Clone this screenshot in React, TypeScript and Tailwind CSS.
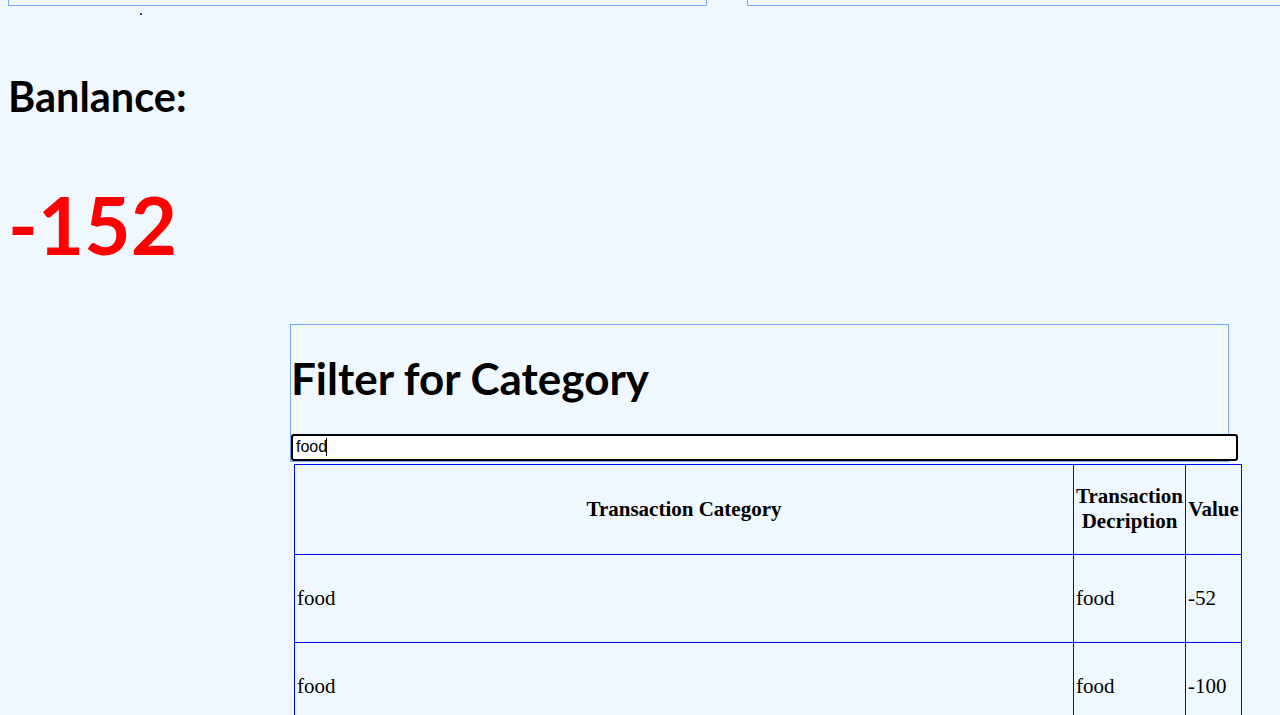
import React from "react";

export default function App() {
  const rows = [
    { cat: "food", desc: "food", val: "-52" },
    { cat: "food", desc: "food", val: "-100" },
  ];
  return (
    <div className="min-h-[715px] h-[715px] overflow-hidden bg-[#f0f8ff] px-[8px]" style={{ fontFamily: "Lato, sans-serif" }}>
      <div className="flex gap-[40px]">
        <div className="w-[699px] h-[6px] border-x border-b border-[#79a7f7] shrink-0" />
        <div className="w-[700px] h-[6px] border-x border-b border-[#79a7f7] shrink-0" />
      </div>
      <div className="pt-[7px] pl-[132px]">
        <div className="w-[2px] h-[2px] bg-[#2233ff]" />
      </div>
      <h2 className="mt-[57px] text-[41.5px] leading-[1.2] font-bold text-black">Banlance:</h2>
      <div className="mt-[54px] text-[80px] leading-[1.2] font-bold text-[#ff0000]">-152</div>
      <div className="ml-[282px] mt-[52px]">
        <div className="w-[939px] h-[138px] border border-[#79a7f7]">
          <h1 className="mt-[27px] text-[44px] leading-[1.2] font-bold text-black">Filter for Category</h1>
          <div className="mt-[29px] w-[947px] h-[27px] border-2 border-black rounded-[3px] bg-white flex items-center pl-[3px] text-[16px] text-black" style={{ fontFamily: '"Liberation Sans", Arial, sans-serif' }}>
            <span>food</span>
            <span className="w-[1px] h-[18px] bg-black -ml-[1px]" />
          </div>
        </div>
        <table className="ml-[4px] mt-[2px] w-[947px] table-fixed border-collapse text-[21px] text-black" style={{ fontFamily: '"Liberation Serif", "Times New Roman", serif' }}>
          <colgroup>
            <col className="w-[779px]" />
            <col className="w-[112px]" />
            <col className="w-[56px]" />
          </colgroup>
          <thead>
            <tr className="h-[90px]">
              <th className="border border-[#0000ff] px-[1px] py-[2px] font-bold text-center align-middle leading-[1.2]">Transaction Category</th>
              <th className="border border-[#0000ff] px-[1px] py-[2px] font-bold text-center align-middle leading-[1.2]">Transaction Decription</th>
              <th className="border border-[#0000ff] px-[1px] py-[2px] font-bold text-center align-middle leading-[1.2]">Value</th>
            </tr>
          </thead>
          <tbody>
            {rows.map((r, i) => (
              <tr key={i} className="h-[88px]">
                <td className="border border-[#0000ff] px-[2px] py-[2px] align-middle">{r.cat}</td>
                <td className="border border-[#0000ff] px-[2px] py-[2px] align-middle">{r.desc}</td>
                <td className="border border-[#0000ff] px-[2px] py-[2px] align-middle">{r.val}</td>
              </tr>
            ))}
          </tbody>
        </table>
      </div>
    </div>
  );
}
